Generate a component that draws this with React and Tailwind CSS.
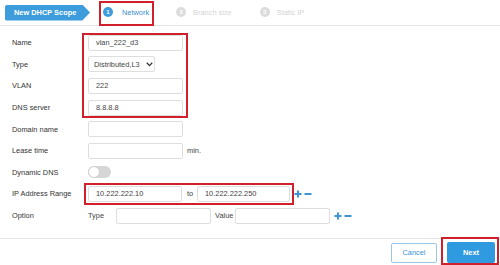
import React from "react";

function PlusMinus() {
  return (
    <div className="flex items-center gap-[2px] ml-[4px]">
      <svg width="8" height="8" viewBox="0 0 8 8">
        <path d="M4 0.5V7.5M0.5 4H7.5" stroke="#3b95d6" strokeWidth="2" />
      </svg>
      <svg width="8" height="8" viewBox="0 0 8 8">
        <path d="M0.5 4H7.5" stroke="#3b95d6" strokeWidth="2" />
      </svg>
    </div>
  );
}

function Input({ value = "", w = "w-[95px]" }) {
  return (
    <div className={`${w} h-[16px] border border-[#dedede] rounded-[2px] bg-white flex items-center pl-[7px] text-[#444]`}>
      {value}
    </div>
  );
}

function Row({ label, children }) {
  return (
    <div className="flex items-center h-[21.6px]">
      <div className="w-[76px] text-[#333]">{label}</div>
      <div className="flex items-center">{children}</div>
    </div>
  );
}

export default function App() {
  return (
    <div
      className="relative w-[500px] h-[265px] bg-white overflow-hidden text-[7.4px]"
      style={{ fontFamily: '"Liberation Sans", Arial, sans-serif' }}
    >
      {/* Header */}
      <div className="h-[26px] border-b border-[#e4e4e4] flex items-center">
        <div className="ml-[5px] w-[85px] h-[16px] bg-[#3d9cdb] rounded-l-[2px] flex items-center pl-[9px] text-white font-bold [clip-path:polygon(0_0,91%_0,100%_50%,91%_100%,0_100%)]">
          New DHCP Scope
        </div>
        <div className="ml-[13px] flex items-center">
          <div className="w-[10px] h-[10px] rounded-full bg-[#3d9cdb] text-white text-[6px] font-bold flex items-center justify-center">1</div>
          <span className="ml-[9px] text-[#3a8fd0]">Network</span>
        </div>
        <div className="ml-[27px] flex items-center">
          <div className="w-[10px] h-[10px] rounded-full bg-[#dcdcdc] text-white text-[6px] font-bold flex items-center justify-center">2</div>
          <span className="ml-[7px] text-[#d4d4d4]">Branch size</span>
        </div>
        <div className="ml-[28px] flex items-center">
          <div className="w-[10px] h-[10px] rounded-full bg-[#dcdcdc] text-white text-[6px] font-bold flex items-center justify-center">3</div>
          <span className="ml-[7px] text-[#d4d4d4]">Static IP</span>
        </div>
      </div>

      {/* Form */}
      <div className="pl-[12px] pt-[6px]">
        <Row label="Name"><Input value="vlan_222_d3" /></Row>
        <Row label="Type">
          <div className="w-[67px] h-[16px] border border-[#dedede] rounded-[2px] flex items-center pl-[5px] text-[#444]">
            <span>Distributed,L3</span>
            <svg className="ml-[6px]" width="7" height="5" viewBox="0 0 7 5">
              <path d="M0.8 0.8L3.5 3.6L6.2 0.8" stroke="#333" strokeWidth="1.3" fill="none" />
            </svg>
          </div>
        </Row>
        <Row label="VLAN"><Input value="222" /></Row>
        <Row label="DNS server"><Input value="8.8.8.8" /></Row>
        <Row label="Domain name"><Input /></Row>
        <Row label="Lease time">
          <Input />
          <span className="ml-[4px] text-[#444]">min.</span>
        </Row>
        <Row label="Dynamic DNS">
          <div className="w-[23px] h-[12px] rounded-full bg-[#d6d6d6] relative">
            <div className="absolute left-0 top-0 w-[12px] h-[12px] rounded-full bg-white border border-[#cfcfcf]" />
          </div>
        </Row>
        <Row label="IP Address Range">
          <Input value="10.222.222.10" w="w-[94px]" />
          <span className="ml-[5px] w-[10px] text-[#444]">to</span>
          <Input value="10.222.222.250" w="w-[93px]" />
          <PlusMinus />
        </Row>
        <Row label="Option">
          <span className="w-[28px] text-[#444]">Type</span>
          <Input w="w-[95px]" />
          <span className="ml-[4px] w-[20px] text-[#444]">Value</span>
          <Input w="w-[95px]" />
          <PlusMinus />
        </Row>
      </div>

      {/* Footer */}
      <div className="absolute left-0 right-0 top-[238px] border-t border-[#e4e4e4] flex justify-end items-center pt-[3px] pr-[5px] gap-[10px]">
        <div className="w-[46px] h-[20px] border border-[#9cc6e6] rounded-[2px] flex items-center justify-center text-[#3a8fd0]">Cancel</div>
        <div className="w-[48px] h-[21px] bg-[#2f9ae0] rounded-[2px] flex items-center justify-center text-white font-bold">Next</div>
      </div>

      {/* Annotation boxes */}
      <div className="absolute left-[99px] top-[1px] w-[55px] h-[25px] border-2 border-[#d21f2c]" />
      <div className="absolute left-[82px] top-[33px] w-[106px] h-[85px] border-2 border-[#d21f2c]" />
      <div className="absolute left-[84px] top-[183px] w-[210px] h-[22px] border-2 border-[#d21f2c]" />
      <div className="absolute left-[441px] top-[237px] w-[58px] h-[28px] border-2 border-[#d21f2c]" />
    </div>
  );
}
